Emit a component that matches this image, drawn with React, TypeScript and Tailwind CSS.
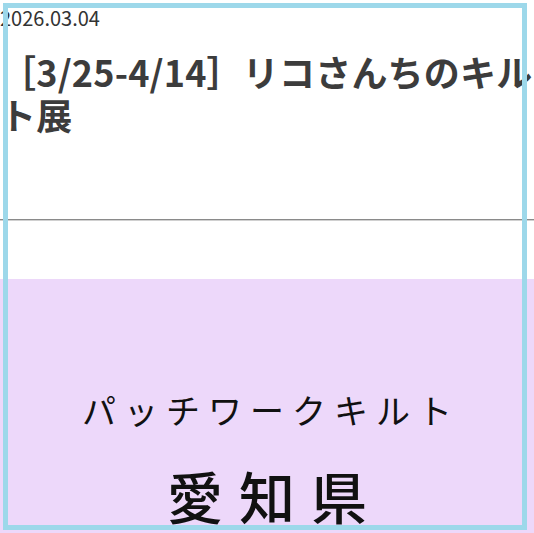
import React from "react";

export default function App() {
  const font = { fontFamily: '"Noto Sans CJK JP", "Noto Sans", sans-serif' };
  return (
    <div className="relative w-[534px] h-[533px] overflow-hidden bg-white" style={font}>
      <div className="flex w-[534px] flex-col">
        <div className="pt-[4px] text-[20px] leading-[28px] text-[#333333]">2026.03.04</div>
        <h1 className="mt-[18px] text-[36px] leading-[43px] font-bold tracking-[0.2px] text-[#3c3c3c]">
          ［3/25-4/14］リコさんちのキルト展
        </h1>
        <div className="mt-[83px] w-full border-t border-b border-t-[#8a8a8a] border-b-[#d0d0d0]" />
        <div className="mt-[58px] w-[534px] bg-[#edd8fa] pt-[109px] pb-[40px] flex flex-col items-center text-[#111111]">
          <div className="text-[34px] leading-[44px] font-normal tracking-[8px] pl-[8px]">パッチワークキルト</div>
          <div className="mt-[31px] text-[56px] leading-[64px] font-medium tracking-[16px] pl-[16px]">愛知県</div>
        </div>
      </div>
      <div className="absolute left-[3px] top-[3px] w-[524px] h-[527px] border-[5px] border-[#9dd8ea] pointer-events-none" />
    </div>
  );
}
